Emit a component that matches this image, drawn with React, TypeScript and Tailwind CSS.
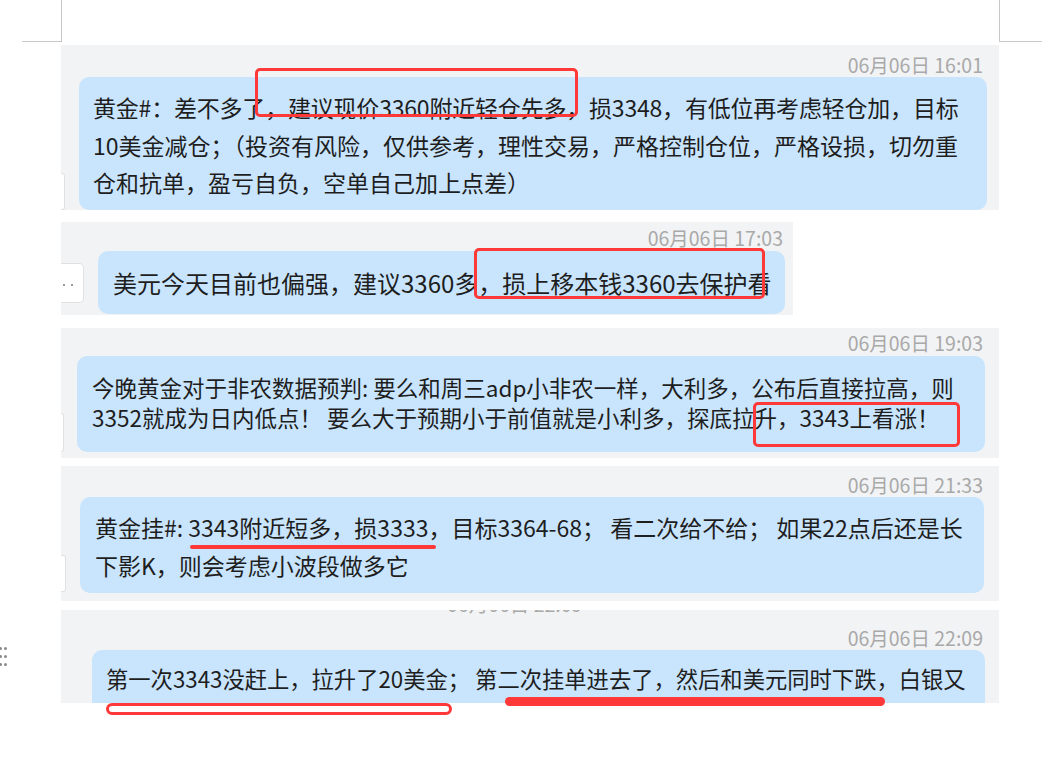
import React from "react";

const Stamp = ({ className, children }: { className?: string; children: React.ReactNode }) => (
  <div className={"whitespace-nowrap text-right text-[19.5px] leading-[24px] text-[#a9a9a9] " + (className ?? "")}>
    {children}
  </div>
);

const Sliver = ({ className }: { className?: string }) => (
  <div className={"shrink-0 rounded-r-[3px] border border-l-0 border-[#e1e1e1] bg-white " + (className ?? "")} />
);

export default function App() {
  return (
    <div className="relative h-[775px] w-[1042px] overflow-hidden bg-white font-['Noto_Sans_CJK_SC','Microsoft_YaHei',sans-serif] text-[#1e1e1e]">
      {/* page corner marks */}
      <div className="flex h-[45px]">
        <div className="ml-[22px] h-[42px] w-[40px] border-r border-b border-[#c8c8c8]" />
        <div className="ml-auto h-[42px] w-[43px] border-l border-b border-[#c8c8c8]" />
      </div>

      {/* 16:01 */}
      <div className="ml-[61px] flex h-[165px] w-[938px] flex-col overflow-hidden bg-[#f2f3f5]">
        <Stamp className="pt-[8px] pr-[16px]">06月06日 16:01</Stamp>
        <div className="flex flex-1 items-end">
          <Sliver className="h-[37px] w-[4px]" />
          <div className="ml-[14px] h-full w-[908px] whitespace-nowrap rounded-[10px] bg-[#c9e5fd] pl-[14px] pt-[12px] text-[23px] leading-[37.5px]">
            <p className="tracking-[-0.2px]">黄金#：差不多了，建议现价3360附近轻仓先多，损3348，有低位再考虑轻仓加，目标</p>
            <p>10美金减仓；（投资有风险，仅供参考，理性交易，严格控制仓位，严格设损，切勿重</p>
            <p>仓和抗单，盈亏自负，空单自己加上点差）</p>
          </div>
        </div>
      </div>

      {/* 17:03 */}
      <div className="mt-[12px] ml-[61px] flex h-[93px] w-[732px] flex-col overflow-hidden bg-[#f2f3f5]">
        <Stamp className="pt-[4px] pr-[10px]">06月06日 17:03</Stamp>
        <div className="mt-[1px] flex items-center">
          <div className="flex h-[40px] w-[23px] shrink-0 items-end gap-[6px] rounded-r-[5px] border border-l-0 border-[#e1e1e1] bg-white pb-[16px] pl-[2px]">
            <span className="h-[2px] w-[2px] rounded-full bg-[#777]" />
            <span className="h-[2px] w-[2px] rounded-full bg-[#777]" />
          </div>
          <div className="ml-[14px] flex h-[63px] w-[687px] items-center whitespace-nowrap rounded-[10px] bg-[#c9e5fd] pl-[15px] text-[24px]">
            美元今天目前也偏强，建议3360多，损上移本钱3360去保护看
          </div>
        </div>
      </div>

      {/* 19:03 */}
      <div className="mt-[13px] ml-[61px] flex h-[130px] w-[938px] flex-col overflow-hidden bg-[#f2f3f5]">
        <Stamp className="pt-[3px] pr-[16px]">06月06日 19:03</Stamp>
        <div className="mt-[1px] flex items-start">
          <Sliver className="mt-[57px] h-[39px] w-[3px]" />
          <div className="ml-[13px] h-[96px] w-[908px] whitespace-nowrap rounded-[10px] bg-[#c9e5fd] pl-[15px] pt-[17px] text-[22.5px] leading-[29.5px]">
            <p>今晚黄金对于非农数据预判: 要么和周三adp小非农一样，大利多，公布后直接拉高，则</p>
            <p>3352就成为日内低点！ 要么大于预期小于前值就是小利多，探底拉升，3343上看涨！</p>
          </div>
        </div>
      </div>

      {/* 21:33 */}
      <div className="mt-[8px] ml-[61px] flex h-[135px] w-[938px] flex-col overflow-hidden bg-[#f2f3f5]">
        <Stamp className="pt-[7px] pr-[16px]">06月06日 21:33</Stamp>
        <div className="flex items-start">
          <Sliver className="mt-[58px] h-[37px] w-[5px]" />
          <div className="ml-[14px] h-[96px] w-[904px] whitespace-nowrap rounded-[10px] bg-[#c9e5fd] pl-[15px] pt-[12px] text-[23px] leading-[37.5px]">
            <p>黄金挂#: 3343附近短多，损3333，目标3364-68； 看二次给不给； 如果22点后还是长</p>
            <p>下影K，则会考虑小波段做多它</p>
          </div>
        </div>
      </div>

      {/* 22:09 */}
      <div className="mt-[9px] flex">
        <div className="w-[61px] pt-[37px]">
          <div className="-ml-[1px] grid w-[8px] grid-cols-2 gap-x-[2px] gap-y-[5px]">
            {[0, 1, 2, 3, 4, 5].map((i) => (
              <span key={i} className="h-[3px] w-[3px] rounded-full bg-[#8a8a8a]" />
            ))}
          </div>
        </div>
        <div className="flex h-[93px] w-[938px] flex-col overflow-hidden bg-[#f2f3f5]">
          <div className="-mt-[18px] whitespace-nowrap pl-[386px] text-[19.5px] leading-[24px] text-[#a9a9a9]">06月06日 22:09</div>
          <Stamp className="mt-[10px] pr-[16px]">06月06日 22:09</Stamp>
          <div className="ml-[31px] w-[893px] flex-1 whitespace-nowrap rounded-t-[10px] bg-[#c9e5fd] pl-[14px] pt-[10px] text-[22.3px] leading-[37px]">
            第一次3343没赶上，拉升了20美金； 第二次挂单进去了，然后和美元同时下跌，白银又
          </div>
        </div>
      </div>

      {/* red annotations */}
      <div className="absolute left-[255px] top-[68px] h-[49px] w-[323px] rounded-[5px] border-[3px] border-[#ff3838]" />
      <div className="absolute left-[474px] top-[248px] h-[51px] w-[291px] rounded-[5px] border-[3px] border-[#ff3838]" />
      <div className="absolute left-[753px] top-[402px] h-[45px] w-[207px] rounded-[5px] border-[3px] border-[#ff3838]" />
      <div className="absolute left-[190px] top-[545px] h-[4px] w-[246px] rounded-full bg-[#ff3838]" />
      <div className="absolute left-[106px] top-[703px] h-[12px] w-[346px] rounded-full border-[3px] border-[#ff3838]" />
      <div className="absolute left-[505px] top-[697px] h-[9px] w-[380px] rounded-full bg-[#ff3838]" />
    </div>
  );
}
